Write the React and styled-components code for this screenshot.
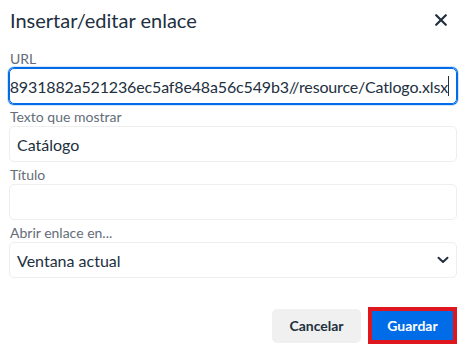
import * as React from 'react';
import styled, {createGlobalStyle} from 'styled-components';

const FONT = `Lato, 'Noto Sans', Arial, sans-serif`;

const GlobalStyle = createGlobalStyle`
  html, body {
    margin: 0;
    padding: 0;
    background: #ffffff;
  }
  body {
    font-family: ${FONT};
    color: #222f3e;
  }
`;

const Dialog = styled.div`
  width: 467px;
  height: 350px;
  box-sizing: border-box;
  display: flex;
  flex-direction: column;
  background: #ffffff;
`;

const Header = styled.div`
  display: flex;
  align-items: center;
  justify-content: space-between;
  height: 40px;
  padding: 0 16px 0 10px;
`;

const Title = styled.h1`
  margin: 0;
  font-size: 20px;
  font-weight: 400;
  line-height: 26px;
  color: #222f3e;
`;

const CloseButton = styled.button`
  display: flex;
  align-items: center;
  justify-content: center;
  width: 20px;
  height: 20px;
  padding: 0;
  border: 0;
  background: transparent;
  color: #222f3e;
  cursor: pointer;
`;

const Body = styled.div`
  display: flex;
  flex-direction: column;
  gap: 4px;
  padding: 10px 10px 0 9px;
`;

const Field = styled.div`
  display: flex;
  flex-direction: column;
`;

const Label = styled.label`
  font-size: 14px;
  line-height: 18px;
  color: #646d78;
  padding-left: 1px;
`;

const Box = styled.div`
  box-sizing: border-box;
  position: relative;
  display: flex;
  align-items: center;
  justify-content: ${(p) => (p.$end ? 'flex-end' : 'flex-start')};
  height: 36px;
  padding: 0 7px;
  border: 1px solid ${(p) => (p.$focus ? '#006ce7' : '#eeeeee')};
  border-radius: 5px;
  box-shadow: ${(p) =>
    p.$focus ? '0 0 0 1px #006ce7, 0 0 0 2px rgba(0,108,231,0.18)' : 'none'};
  overflow: hidden;
  white-space: nowrap;
  font-size: 16px;
  letter-spacing: ${(p) => (p.$end ? '-0.15px' : 'normal')};
  color: #222f3e;
`;

const Caret = styled.span`
  display: inline-block;
  width: 1px;
  height: 20px;
  background: #222f3e;
  flex: none;
`;

const Chevron = styled.span`
  margin-left: auto;
  display: flex;
  align-items: center;
`;

const Footer = styled.div`
  display: flex;
  justify-content: flex-end;
  align-items: center;
  gap: 7px;
  margin-top: auto;
  padding: 0 10px 6px 0;
`;

const Button = styled.button`
  box-sizing: border-box;
  height: ${(p) => (p.$primary ? '37px' : '34px')};
  width: 89px;
  padding: 0;
  border: ${(p) => (p.$primary ? '4px solid #e0161e' : '0')};
  border-radius: ${(p) => (p.$primary ? '0' : '5px')};
  background: ${(p) => (p.$primary ? '#006ce7' : '#f0f0f0')};
  color: ${(p) => (p.$primary ? '#ffffff' : '#222f3e')};
  font-family: ${FONT};
  font-size: 14px;
  font-weight: 700;
  cursor: pointer;
`;

export default function App() {
  return (
    <Dialog>
      <GlobalStyle />
      <Header>
        <Title>Insertar/editar enlace</Title>
        <CloseButton aria-label="Cerrar">
          <svg width="12" height="12" viewBox="0 0 12 12">
            <path
              d="M1.2 1.2 L10.8 10.8 M10.8 1.2 L1.2 10.8"
              stroke="currentColor"
              strokeWidth="2.2"
              strokeLinecap="round"
            />
          </svg>
        </CloseButton>
      </Header>
      <Body>
        <Field>
          <Label>URL</Label>
          <Box $focus $end>
            https://files.example/doc/8931882a521236ec5af8e48a56c549b3//resource/Catlogo.xlsx
            <Caret />
          </Box>
        </Field>
        <Field>
          <Label>Texto que mostrar</Label>
          <Box>Catálogo</Box>
        </Field>
        <Field>
          <Label>Título</Label>
          <Box />
        </Field>
        <Field>
          <Label>Abrir enlace en...</Label>
          <Box>
            Ventana actual
            <Chevron>
              <svg width="12" height="8" viewBox="0 0 12 8">
                <path
                  d="M1.5 1.8 L6 6 L10.5 1.8"
                  fill="none"
                  stroke="#222f3e"
                  strokeWidth="2"
                  strokeLinecap="round"
                  strokeLinejoin="round"
                />
              </svg>
            </Chevron>
          </Box>
        </Field>
      </Body>
      <Footer>
        <Button>Cancelar</Button>
        <Button $primary>Guardar</Button>
      </Footer>
    </Dialog>
  );
}
